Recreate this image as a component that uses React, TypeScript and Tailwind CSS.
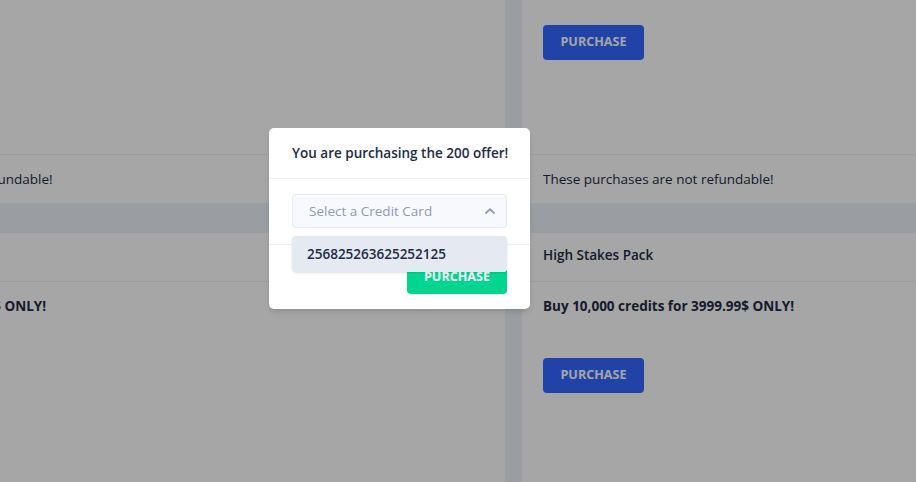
import React from "react";

const offers = [
  [
    { name: "Starter Pack", text: "Buy 100 credits for 39.99$ ONLY!" },
    { name: "Medium Stakes Pack", text: "Buy 500 credits for 199.99$ ONLY!" },
  ],
  [
    { name: "Pro Pack", text: "Buy 200 credits for 79.99$ ONLY!" },
    { name: "High Stakes Pack", text: "Buy 10,000 credits for 3999.99$ ONLY!" },
  ],
];

function OfferCard({ name, text }: { name: string; text: string }) {
  return (
    <article className="flex flex-col rounded border border-[#edf1f7] bg-white text-[#222b45]">
      <header className="border-b border-[#edf1f7] px-[21px] pt-[10px] pb-[14px] text-[13.5px] leading-6 font-semibold">
        {name}
      </header>
      <div className="px-[21px] pt-[12px] pb-[94px]">
        <p className="text-[13.5px] leading-6 font-bold">{text}</p>
        <button className="mt-[40px] h-[35px] w-[101px] rounded bg-[#3366ff] text-[12.6px] font-bold text-white uppercase">
          Purchase
        </button>
      </div>
      <footer className="border-t border-[#edf1f7] px-[21px] py-3 text-[13.5px] leading-6">
        These purchases are not refundable!
      </footer>
    </article>
  );
}

function ChevronUp() {
  return (
    <svg width="10" height="6" viewBox="0 0 10 6" fill="none">
      <path
        d="M1 5L5 1.2L9 5"
        stroke="#8f9bb3"
        strokeWidth="1.8"
        strokeLinecap="round"
        strokeLinejoin="round"
      />
    </svg>
  );
}

export default function App() {
  return (
    <div
      className="relative h-[482px] w-[916px] overflow-hidden bg-[#edf1f7]"
      style={{ fontFamily: '"Open Sans", "Noto Sans", sans-serif' }}
    >
      <div className="-mt-[101px] -ml-[200px] flex gap-[15px]">
        {offers.map((column, i) => (
          <div key={i} className="flex w-[706px] shrink-0 flex-col gap-[28px]">
            {column.map((offer) => (
              <OfferCard key={offer.name} {...offer} />
            ))}
          </div>
        ))}
      </div>

      {/* backdrop */}
      <div className="absolute inset-0 bg-black/35" />

      {/* dialog */}
      <div className="absolute top-[128px] left-[269px] w-[261px] rounded-[5px] bg-white text-[#222b45] shadow-md">
        <div className="border-b border-[#edf1f7] px-[23px] py-[13px] text-[13.5px] leading-6 font-semibold whitespace-nowrap">
          You are purchasing the 200 offer!
        </div>
        <div className="border-b border-[#edf1f7] px-[23px] pt-[15px] pb-[16px]">
          <div className="flex h-[34px] items-center justify-between rounded border border-[#e4e9f2] bg-[#f7f9fc] pr-[11px] pl-4 text-[13.5px] text-[#8f9bb3]">
            <span>Select a Credit Card</span>
            <ChevronUp />
          </div>
        </div>
        <div className="flex justify-end px-[23px] pt-[14px] pb-[15px]">
          <button className="h-[35px] w-[100px] rounded bg-[#00d68f] pt-px text-[12.6px] font-bold text-white uppercase">
            Purchase
          </button>
        </div>

        <ul className="absolute top-[108px] left-[23px] w-[215px] overflow-hidden rounded bg-white shadow-sm">
          <li className="flex h-9 items-center bg-[#e4e9f2] pl-[15px] text-[13.5px] font-semibold text-[#222b45]">
            256825263625252125
          </li>
        </ul>
      </div>
    </div>
  );
}
